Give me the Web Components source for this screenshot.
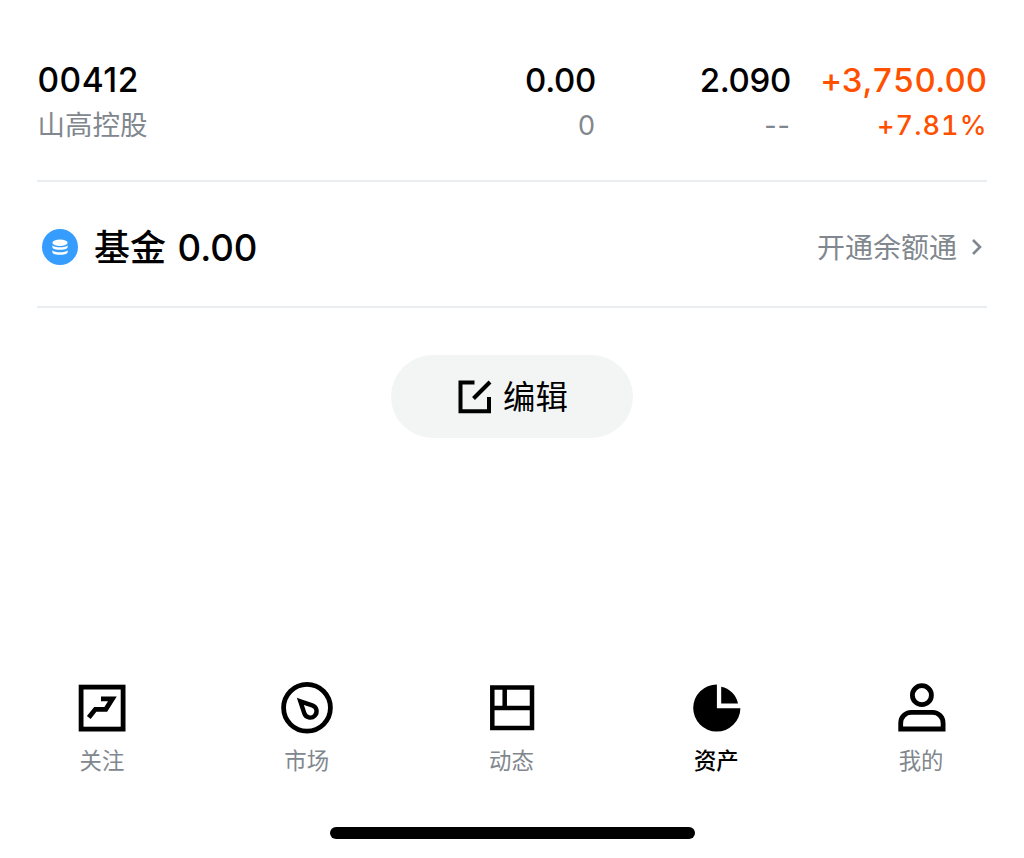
<!DOCTYPE html>
<html lang="zh-CN">
<head>
<meta charset="utf-8">
<title>资产</title>
<style>
  body {
    margin: 0;
    background: #ffffff;
    color: #000000;
    font-family: Inter, "Noto Sans CJK SC", sans-serif;
  }
</style>
</head>
<body>
<assets-page>
  <holding-row code="00412" name="山高控股" value="0.00" quantity="0" price="2.090" cost="--" profit="+3,750.00" percent="+7.81%"></holding-row>
  <fund-row label="基金" amount="0.00">开通余额通</fund-row>
  <edit-button>编辑</edit-button>
  <tab-bar slot="footer">
    <tab-item icon="watch">关注</tab-item>
    <tab-item icon="market">市场</tab-item>
    <tab-item icon="feed">动态</tab-item>
    <tab-item icon="assets" selected>资产</tab-item>
    <tab-item icon="mine">我的</tab-item>
  </tab-bar>
</assets-page>

<script>
  // Page frame, content above and tabs below
  class AssetsPage extends HTMLElement {
    constructor() {
      super();

      this.attachShadow( {mode: 'open'} );
      this.shadowRoot.innerHTML = /* template */ `
        <style>
          :host {
            --gray: #81878e;
            --rise: #ff5000;
            --line: #eaedef;
            box-sizing: border-box;
            display: flex;
            flex-direction: column;
            width: 1024px;
            height: 858px;
            overflow: hidden;
          }

          main {
            display: flex;
            flex: 1;
            flex-direction: column;
            padding: 0 37px;
          }

          .home {
            align-self: center;
            width: 365px;
            height: 12px;
            margin: 0 0 19.5px 1px;
            border-radius: 6px;
            background: #000000;
          }
        </style>
        <main><slot></slot></main>
        <slot name="footer"></slot>
        <div class="home"></div>
      `;
    }
  }

  // One stock position
  class HoldingRow extends HTMLElement {
    constructor() {
      super();

      this.attachShadow( {mode: 'open'} );
      this.shadowRoot.innerHTML = /* template */ `
        <style>
          :host {
            box-sizing: border-box;
            display: grid;
            grid-template-columns: 1fr 200px 195px 196px;
            height: 182px;
            padding-top: 58px;
            border-bottom: 2px solid var( --line );
          }

          .cell {
            display: flex;
            flex-direction: column;
            align-items: flex-end;
            white-space: nowrap;
          }

          .cell.stock {
            align-items: flex-start;
            padding-left: 0.5px;
          }

          .top {
            font-size: 33px;
            font-weight: 500;
            line-height: 45px;
            letter-spacing: -0.3px;
          }

          .bottom {
            color: var( --gray );
            font-size: 27px;
            line-height: 45px;
            letter-spacing: 1px;
          }

          .top.code {
            font-size: 33.5px;
            letter-spacing: 0.5px;
          }

          .bottom.name {
            font-size: 27.5px;
            letter-spacing: 0;
          }

          .rise {
            color: var( --rise );
            font-variant-numeric: tabular-nums;
          }

          .top.profit {
            letter-spacing: -0.1px;
          }

          .bottom.percent {
            font-weight: 500;
            letter-spacing: 1.1px;
            margin-right: -0.6px;
          }
        </style>
        <div class="cell stock"><span class="top code"></span><span class="bottom name"></span></div>
        <div class="cell"><span class="top value"></span><span class="bottom quantity"></span></div>
        <div class="cell"><span class="top price"></span><span class="bottom cost"></span></div>
        <div class="cell"><span class="top rise profit"></span><span class="bottom rise percent"></span></div>
      `;
    }

    // Setup
    connectedCallback() {
      const fields = ['code', 'name', 'value', 'quantity', 'price', 'cost', 'profit', 'percent'];
      fields.forEach( ( field ) => {
        this.shadowRoot.querySelector( '.' + field ).textContent = this.getAttribute( field );
      } );
    }
  }

  // Fund balance with a link on the right
  class FundRow extends HTMLElement {
    constructor() {
      super();

      this.attachShadow( {mode: 'open'} );
      this.shadowRoot.innerHTML = /* template */ `
        <style>
          :host {
            box-sizing: border-box;
            display: flex;
            align-items: center;
            height: 126px;
            padding: 6px 5px 0 5px;
            border-bottom: 2px solid var( --line );
          }

          svg {
            display: block;
            flex: none;
          }

          .title {
            display: flex;
            align-items: center;
            flex: 1;
            gap: 11.5px;
            margin-left: 16px;
            font-size: 36px;
            font-weight: 500;
            line-height: 48px;
          }

          .label {
            padding-top: 2px;
          }

          .amount {
            padding-top: 2px;
            font-size: 36.6px;
          }

          .link {
            margin: 2px 14px 0 0;
            color: var( --gray );
            font-size: 28px;
            line-height: 44px;
          }
        </style>
        <svg width="36" height="36" viewBox="0 0 36 36">
          <circle cx="18" cy="18" r="18" fill="#369dff"/>
          <ellipse cx="18" cy="13.7" rx="7.6" ry="3.2" fill="#fff"/>
          <path d="M10.4 16.2c2 2.7 13.2 2.7 15.2 0v2.2c-1 3.2-14.2 3.2-15.2 0zM10.4 21.2c2 2.7 13.2 2.7 15.2 0v2.2c-1 3.2-14.2 3.2-15.2 0z" fill="#fff"/>
        </svg>
        <div class="title"><span class="label"></span><span class="amount"></span></div>
        <span class="link"><slot></slot></span>
        <svg width="11" height="18" viewBox="0 0 11 18">
          <path d="M2 2 9 9 2 16" fill="none" stroke="#81878e" stroke-width="2.6"/>
        </svg>
      `;
    }

    // Setup
    connectedCallback() {
      this.shadowRoot.querySelector( '.label' ).textContent = this.getAttribute( 'label' );
      this.shadowRoot.querySelector( '.amount' ).textContent = this.getAttribute( 'amount' );
    }
  }

  class EditButton extends HTMLElement {
    constructor() {
      super();

      this.attachShadow( {mode: 'open'} );
      this.shadowRoot.innerHTML = /* template */ `
        <style>
          :host {
            display: flex;
            justify-content: center;
            margin-top: 47px;
          }

          button {
            display: flex;
            align-items: center;
            justify-content: center;
            gap: 11px;
            width: 242px;
            height: 83px;
            padding: 0 0 0 2px;
            border: none;
            border-radius: 42px;
            background: #f3f5f5;
            color: #000000;
            font: inherit;
            font-size: 32.4px;
            line-height: 44px;
          }

          svg {
            display: block;
          }

          span {
            padding-top: 3px;
          }
        </style>
        <button>
          <svg width="34" height="34" viewBox="0 0 34 34" fill="none" stroke="#000" stroke-width="4">
            <path d="M16.5 2.5H2.5V31.2H31V17"/>
            <path d="M15.5 18.5 32 2"/>
          </svg>
          <span><slot></slot></span>
        </button>
      `;
    }
  }

  class TabBar extends HTMLElement {
    constructor() {
      super();

      this.attachShadow( {mode: 'open'} );
      this.shadowRoot.innerHTML = /* template */ `
        <style>
          :host {
            box-sizing: border-box;
            display: flex;
            height: 148.5px;
          }
        </style>
        <slot></slot>
      `;
    }
  }

  const ICONS = {
    watch: `
      <rect x="9.1" y="9.1" width="42" height="42"/>
      <path d="M16.8 39.4 23.3 31.3H33.8L40.4 20.8H29"/>`,
    market: `
      <circle cx="30" cy="29.8" r="23.4"/>
      <path d="M23.3 23.3 35.25 27.3A6.3 6.3 0 1 1 27.3 35.25Z" stroke-width="4.4"/>`,
    feed: `
      <path d="M10.3 9.6H50V50H10.3ZM10.3 30H50M22.7 9.6V30" stroke-width="4.5"/>`,
    assets: `
      <path d="M29.9 6.4A23.6 23.6 0 1 0 53.4 30.3H29.9ZM34.2 8.8A21.6 21.6 0 0 1 51 25.4H34.2Z" fill="#000" stroke="none"/>`,
    mine: `
      <circle cx="29.9" cy="17.2" r="9.5"/>
      <path d="M8.7 51V45A10.5 10.5 0 0 1 19.2 34.4H40.6A10.5 10.5 0 0 1 51.1 45V51Z"/>`
  };

  class TabItem extends HTMLElement {
    constructor() {
      super();

      this.attachShadow( {mode: 'open'} );
      this.shadowRoot.innerHTML = /* template */ `
        <style>
          :host {
            display: flex;
            flex: 1;
            flex-direction: column;
            align-items: center;
            color: var( --gray );
            font-size: 22.4px;
            line-height: 32px;
          }

          :host( [selected] ) {
            color: #000000;
            font-weight: 500;
          }

          svg {
            display: block;
            margin-bottom: 7px;
          }

          span {
            margin-right: 1px;
          }
        </style>
        <svg width="60" height="60" viewBox="0 0 60 60" fill="none" stroke="#000" stroke-width="4.8"></svg>
        <span><slot></slot></span>
      `;
    }

    // Setup
    connectedCallback() {
      this.shadowRoot.querySelector( 'svg' ).innerHTML = ICONS[this.getAttribute( 'icon' )];
    }
  }

  window.customElements.define( 'assets-page', AssetsPage );
  window.customElements.define( 'holding-row', HoldingRow );
  window.customElements.define( 'fund-row', FundRow );
  window.customElements.define( 'edit-button', EditButton );
  window.customElements.define( 'tab-bar', TabBar );
  window.customElements.define( 'tab-item', TabItem );
</script>
</body>
</html>
